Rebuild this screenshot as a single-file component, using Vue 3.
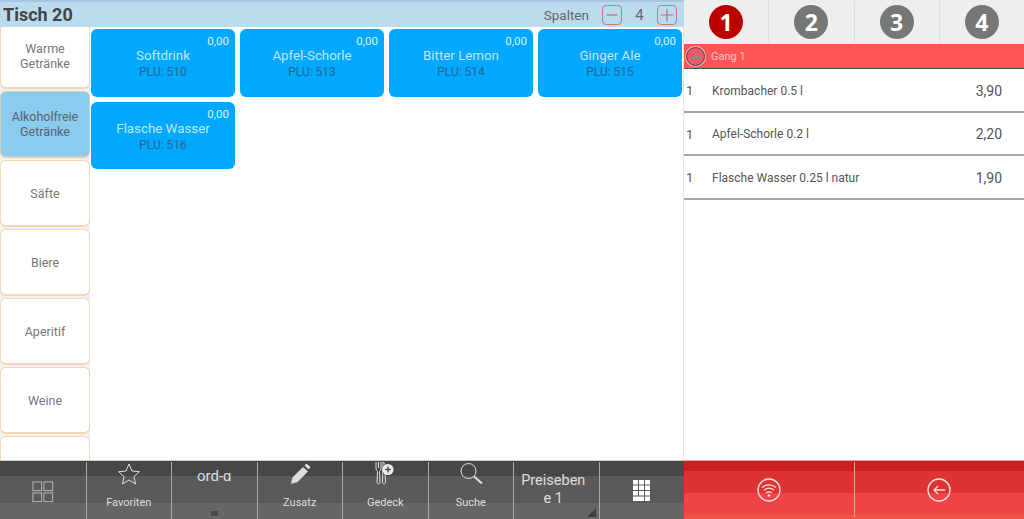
<template>
  <div class="pos">
    <section class="order">
      <header class="order__head">
        <h1 class="order__table">Tisch 20</h1>
        <div class="columns">
          <span class="columns__label">Spalten</span>
          <button class="columns__btn">
            <svg viewBox="0 0 20 20" width="18" height="18"><path d="M4 10h12" /></svg>
          </button>
          <span class="columns__count">4</span>
          <button class="columns__btn">
            <svg viewBox="0 0 20 20" width="18" height="18"><path d="M3 10h14M10 3v14" /></svg>
          </button>
        </div>
      </header>

      <div class="order__main">
        <nav class="cats">
          <div
            v-for="cat in categories"
            :key="cat.name"
            class="cats__item"
            :class="{ 'cats__item--active': cat.active, 'cats__item--first': cat.first, 'cats__item--last': cat.last }"
          >
            {{ cat.name }}
          </div>
        </nav>
        <div class="products">
          <div v-for="p in products" :key="p.plu" class="product">
            <span class="product__price">0,00</span>
            <span class="product__name">{{ p.name }}</span>
            <span class="product__plu">PLU: {{ p.plu }}</span>
          </div>
        </div>
      </div>

      <footer class="tools">
        <div class="tool">
          <svg class="tool__icon tool__icon--grid" viewBox="0 0 24 24" width="22" height="22">
            <rect x="1" y="1" width="9.500" height="9.500" />
            <rect x="13" y="1" width="9.500" height="9.500" />
            <rect x="1" y="13" width="9.500" height="9.500" />
            <rect x="13" y="13" width="9.500" height="9.500" />
          </svg>
        </div>
        <div class="tool tool--top">
          <svg class="tool__icon" viewBox="0 0 24 24" width="24" height="24">
            <path d="M12 2l3 7 7.500.7-5.700 5 1.800 7.300-6.600-4-6.600 4 1.800-7.300-5.700-5L9 9z" />
          </svg>
          <span class="tool__label">Favoriten</span>
        </div>
        <div class="tool tool--text">
          <span class="tool__big">ord-ɑ</span>
          <i class="tool__dot"></i>
        </div>
        <div class="tool tool--top">
          <svg class="tool__icon tool__icon--solid" viewBox="0 0 24 24" width="24" height="24">
            <path d="M3 22l1.500-6.500L15 5l5 4.500L9.500 20z" />
            <path d="M16.500 3.500l2-2 4 3.500-2 2.500z" />
          </svg>
          <span class="tool__label">Zusatz</span>
        </div>
        <div class="tool tool--top">
          <svg class="tool__icon tool__icon--cutlery" viewBox="0 0 24 24" width="24" height="24">
            <path d="M3 0v6c0 2 1 3 1.500 3.500L4 20c0 2.500 3 2.500 3 0l-.5-10.500C7 9 8 8 8 6V0M5.500 0v6" />
            <path d="M10 0c2 1 3 4 3 8l-1 3 .5 9c0 2.500-3 2.500-3 0z" />
            <circle class="fill" cx="15" cy="7.500" r="5.500" />
            <path class="cut" d="M12 7.500h6M15 4.500v6" />
          </svg>
          <span class="tool__label">Gedeck</span>
        </div>
        <div class="tool tool--top">
          <svg class="tool__icon" viewBox="0 0 24 24" width="24" height="24">
            <circle cx="9.500" cy="9" r="7.500" />
            <path d="M15 14.500l8 7" stroke-width="2" />
          </svg>
          <span class="tool__label">Suche</span>
        </div>
        <div class="tool tool--text tool--wrap">
          <span class="tool__big tool__big--wrap">Preiseben e 1</span>
          <i class="tool__corner"></i>
        </div>
        <div class="tool">
          <svg class="tool__keypad" viewBox="0 0 17 21" width="17" height="21">
            <rect v-for="k in keys" :key="k.id" :x="k.x" :y="k.y" :width="k.w" height="4.500" />
          </svg>
        </div>
      </footer>
    </section>

    <aside class="ticket">
      <div class="seats">
        <div v-for="n in 4" :key="n" class="seats__cell">
          <span class="seats__num" :class="{ 'seats__num--active': n === 1 }">{{ n }}</span>
        </div>
      </div>
      <div class="course">
        <span class="course__toggle"><i></i></span>
        <span>Gang 1</span>
      </div>
      <ul class="lines">
        <li v-for="line in lines" :key="line.name" class="line">
          <span class="line__qty">1</span>
          <span class="line__name">{{ line.name }}</span>
          <span class="line__price">{{ line.price }}</span>
        </li>
      </ul>
      <footer class="actions">
        <div class="actions__cell">
          <svg viewBox="0 0 24 24" width="24" height="24">
            <circle cx="12" cy="12" r="11" />
            <path d="M5 9.500c4-3.400 10-3.400 14 0M7 12.200c3-2.400 7-2.400 10 0M9.200 14.800c1.700-1.200 3.900-1.200 5.600 0" />
            <circle class="fill" cx="12" cy="17.500" r="1.300" />
          </svg>
        </div>
        <div class="actions__cell">
          <svg viewBox="0 0 24 24" width="24" height="24">
            <circle cx="12" cy="12" r="11" />
            <path d="M18 12H7M11 8l-4 4 4 4" />
          </svg>
        </div>
      </footer>
    </aside>
  </div>
</template>

<script setup>
const categories = [
  { name: "Warme Getränke", first: true },
  { name: "Alkoholfreie Getränke", active: true },
  { name: "Säfte" },
  { name: "Biere" },
  { name: "Aperitif" },
  { name: "Weine" },
  { name: "", last: true },
];

const products = [
  { name: "Softdrink", plu: 510 },
  { name: "Apfel-Schorle", plu: 513 },
  { name: "Bitter Lemon", plu: 514 },
  { name: "Ginger Ale", plu: 515 },
  { name: "Flasche Wasser", plu: 516 },
];

const lines = [
  { name: "Krombacher 0.5 l", price: "3,90" },
  { name: "Apfel-Schorle 0.2 l", price: "2,20" },
  { name: "Flasche Wasser 0.25 l natur", price: "1,90" },
];

// keypad icon: three rows of three keys, bottom row has a wide key
const keys = [];
for (let row = 0; row < 3; row++) {
  for (let col = 0; col < 3; col++) {
    keys.push({ id: `${row}-${col}`, x: col * 6, y: row * 5.500, w: 5 });
  }
}
keys.push({ id: "wide", x: 0, y: 16.500, w: 11 });
keys.push({ id: "last", x: 12, y: 16.500, w: 5 });
</script>

<style>
html,
body {
  margin: 0;
  background: #fff;
}
</style>

<style scoped>
.pos {
  display: flex;
  width: 1024px;
  height: 519px;
  overflow: hidden;
  font-family: Roboto, "Liberation Sans", sans-serif;
  background: #fff;
}

.order {
  display: flex;
  flex-direction: column;
  width: 684px;
  flex: none;
}

.order__head {
  display: flex;
  align-items: center;
  justify-content: space-between;
  height: 25px;
  padding: 0 7px 0 3px;
  flex: none;
  border-top: 2px solid #a9c4e0;
  background: #bbdcee;
}

.order__table {
  margin: 0;
  font-size: 18px;
  font-weight: 700;
  color: #444;
}

.columns {
  display: flex;
  align-items: center;
  color: #666;
}

.columns__label {
  margin-right: 13px;
  font-size: 13.500px;
}

.columns__btn {
  display: flex;
  align-items: center;
  justify-content: center;
  width: 20px;
  height: 20px;
  padding: 0;
  border: 1px solid #c07a8a;
  border-radius: 4px;
  background: transparent;
}

.columns__btn svg {
  fill: none;
  stroke: #b86a7c;
  stroke-width: 1.300;
}

.columns__count {
  width: 35px;
  font-size: 15px;
  text-align: center;
}

.order__main {
  display: flex;
  flex: 1;
  min-height: 0;
  border-right: 1px solid #e5e5e5;
}

.cats {
  display: flex;
  flex-direction: column;
  gap: 2px;
  width: 90px;
  flex: none;
  overflow: hidden;
  background: #f1f1f1;
}

.cats__item {
  display: flex;
  align-items: center;
  justify-content: center;
  box-sizing: border-box;
  height: 67px;
  flex: none;
  padding: 0 6px;
  border: 1px solid #f2d8b4;
  border-bottom-width: 2px;
  border-radius: 6px;
  background: #fff;
  color: #777;
  font-size: 12.500px;
  line-height: 15px;
  text-align: center;
}

.cats__item--first {
  height: 62px;
  padding-bottom: 2px;
  border-top: 0;
  border-radius: 0 0 6px 6px;
}

.cats__item--active {
  border-color: #d7cdb8;
  background: #8bcbee;
  color: #56646e;
}

.cats__item--last {
  height: 24px;
  border-bottom: 0;
  border-radius: 6px 6px 0 0;
}

.products {
  display: grid;
  grid-template-columns: repeat(4, 144px);
  grid-auto-rows: 67.500px;
  align-content: start;
  gap: 5px;
  flex: 1;
  padding: 2px 0 0 1px;
}

.product {
  position: relative;
  display: flex;
  flex-direction: column;
  align-items: center;
  padding-top: 18px;
  box-sizing: border-box;
  border-radius: 6px;
  background: #00a8ff;
}

.product__price {
  position: absolute;
  top: 5px;
  right: 6px;
  color: #dff1ff;
  font-size: 11.500px;
}

.product__name {
  color: #c4e6fb;
  font-size: 13.300px;
  line-height: 17px;
}

.product__plu {
  color: #2a658e;
  font-size: 12px;
  line-height: 16px;
}

.tools {
  display: grid;
  grid-template-columns: repeat(8, 1fr);
  height: 59px;
  flex: none;
  border-top: 1px solid #ccc;
  box-sizing: border-box;
  background: linear-gradient(#474747 0 15px, #5a5a5a 15px 42px, #666 42px);
}

.tool {
  position: relative;
  display: flex;
  flex-direction: column;
  align-items: center;
  justify-content: center;
  box-sizing: border-box;
  min-width: 0;
  margin-top: 1px;
  border-left: 1px solid #a8a8a8;
  color: #ddd;
}

.tool:first-child {
  border-left: 0;
}

.tool--top {
  justify-content: flex-start;
}

.tool__icon {
  fill: none;
  stroke: #ddd;
  stroke-width: 1;
}

.tool__icon--grid {
  margin-top: 2px;
  stroke: #b5b5b5;
  stroke-width: 1.100;
}

.tool__icon--solid {
  fill: #ddd;
  stroke: none;
}

.tool__icon .fill {
  fill: #eee;
  stroke: none;
}

.tool__icon .cut {
  stroke: #555;
  stroke-width: 1.500;
}

.tool__label {
  margin-top: 10px;
  font-size: 11px;
  line-height: 13px;
}

.tool--text {
  justify-content: flex-start;
  padding-top: 5px;
}

.tool--wrap {
  padding-top: 10px;
  padding-right: 6px;
}

.tool__big {
  font-size: 15px;
  line-height: 18px;
}

.tool--wrap .tool__big {
  font-size: 14.500px;
}

.tool__big--wrap {
  width: 68px;
  text-align: center;
  word-break: break-all;
}

.tool__dot {
  position: absolute;
  bottom: 3px;
  left: 50%;
  width: 7px;
  height: 5px;
  margin-left: -3px;
  background: #4a4a4a;
}

.tool__corner {
  position: absolute;
  right: 3px;
  bottom: 2px;
  border-width: 0 0 9px 9px;
  border-style: solid;
  border-color: transparent transparent #3f3f3f transparent;
}

.tool__keypad {
  fill: #fff;
}

.ticket {
  display: flex;
  flex-direction: column;
  flex: 1;
  min-width: 0;
}

.seats {
  display: flex;
  height: 44px;
  flex: none;
  background: #eee;
}

.seats__cell {
  display: flex;
  align-items: center;
  justify-content: center;
  flex: 1;
  border-left: 1px solid #dcdcdc;
  margin: 1px 0 2px;
}

.seats__cell:first-child {
  border-left: 0;
}

.seats__num {
  display: flex;
  align-items: center;
  justify-content: center;
  width: 34px;
  height: 34px;
  border-radius: 50%;
  background: #777;
  color: #fff;
  font-family: "Open Sans", sans-serif;
  font-size: 23px;
  font-weight: 700;
}

.seats__num--active {
  background: #bb0000;
}

.course {
  display: flex;
  align-items: center;
  gap: 6px;
  height: 25px;
  flex: none;
  box-sizing: border-box;
  padding-left: 2px;
  border-bottom: 1px solid #555;
  background: #ff5555;
  color: #ffc4c4;
  font-size: 11px;
}

.course__toggle {
  display: flex;
  align-items: center;
  justify-content: center;
  box-sizing: border-box;
  width: 19px;
  height: 19px;
  border: 1.500px solid #444;
  border-radius: 50%;
  box-shadow: 0 0 0 1px #ffb0b0;
  background: #f0586a;
}

.course__toggle i {
  border-width: 0 6px 5px;
  border-style: solid;
  border-color: transparent transparent #8a8a8a;
}

.lines {
  flex: 1;
  margin: 0;
  padding: 0;
  list-style: none;
}

.line {
  display: flex;
  align-items: center;
  height: 43.600px;
  box-sizing: border-box;
  padding: 2px 22px 0 2px;
  border-bottom: 2px solid #a5a5a5;
  color: #555;
  font-size: 12px;
}

.line__qty {
  width: 26px;
  font-size: 13px;
}

.line__name {
  flex: 1;
}

.line__price {
  font-size: 14px;
}

.actions {
  display: flex;
  height: 59px;
  flex: none;
  box-sizing: border-box;
  border-top: 1px solid #e8a0a0;
  background: linear-gradient(#cb2020 0 10px, #dd3333 10px 32px, #ef4545 32px 54px, #ee5544 54px);
}

.actions__cell {
  display: flex;
  align-items: center;
  justify-content: center;
  flex: 1;
  margin: 1px 0 2px;
}

.actions__cell + .actions__cell {
  border-left: 1px solid #e6a0a0;
}

.actions__cell svg {
  fill: none;
  stroke: #ffe2e2;
  stroke-width: 1.300;
}

.actions__cell svg .fill {
  fill: #ffe2e2;
  stroke: none;
}
</style>
